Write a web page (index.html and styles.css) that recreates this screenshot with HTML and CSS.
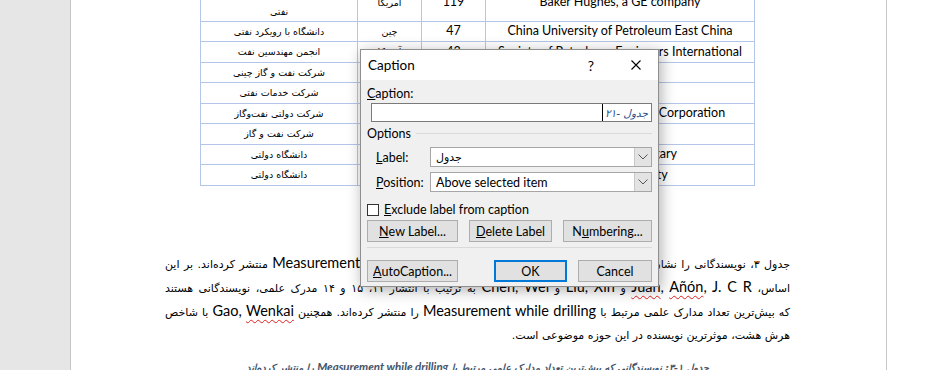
FILE: index.html
```html
<!DOCTYPE html>
<html lang="fa">
<head>
<meta charset="utf-8">
<link rel="stylesheet" href="styles.css">
</head>
<body>
<div class="app">
  <div class="gutter"></div>
  <div class="page">
    <table class="tbl">
      <colgroup><col class="c1"><col class="c2"><col class="c3"><col class="c4"></colgroup>
      <tr class="first"><td class="fa">شرکت خدمات مهندسی<br>نفتی</td><td class="fa">آمریکا</td><td>119</td><td>Baker Hughes, a GE company</td></tr>
      <tr><td class="fa">دانشگاه با رویکرد نفتی</td><td class="fa">چین</td><td>47</td><td>China University of Petroleum East China</td></tr>
      <tr><td class="fa">انجمن مهندسین نفت</td><td class="fa">آمریکا</td><td>43</td><td>Society of Petroleum Engineers International</td></tr>
      <tr><td class="fa">شرکت نفت و گاز چینی</td><td class="fa">چین</td><td>40</td><td>Sinopec</td></tr>
      <tr><td class="fa">شرکت خدمات نفتی</td><td class="fa">آمریکا</td><td>35</td><td>Schlumberger</td></tr>
      <tr><td class="fa">شرکت دولتی نفت‌وگاز</td><td class="fa">چین</td><td>30</td><td>China National Petroleum Corporation</td></tr>
      <tr><td class="fa">شرکت نفت و گاز</td><td class="fa">آمریکا</td><td>28</td><td>Halliburton</td></tr>
      <tr><td class="fa">دانشگاه دولتی</td><td class="fa">کانادا</td><td>25</td><td>University of Calgary</td></tr>
      <tr><td class="fa">دانشگاه دولتی</td><td class="fa">چین</td><td>22</td><td>Tianjin University</td></tr>
    </table>

    <div class="para" dir="rtl">
      <div class="ln j">جدول ۳، نویسندگانی را نشان می‌دهد که بیش‌ترین تعداد مدارک مرتبط با <span class="en">Measurement while drilling</span> منتشر کرده‌اند. بر این</div>
      <div class="ln j">اساس، <span class="en"><span class="sq">Juan</span>, <span class="sq">Añón</span>, J. C R</span> و <span class="en">Liu, Xin</span> و <span class="en">Chen, Wei</span> به ترتیب با انتشار ۱۱، ۱۵ و ۱۴ مدرک علمی، نویسندگانی هستند</div>
      <div class="ln j">که بیش‌ترین تعداد مدارک علمی مرتبط با <span class="en">Measurement while drilling</span> را منتشر کرده‌اند. همچنین <span class="en">Gao, <span class="sq">Wenkai</span></span> با شاخص</div>
      <div class="ln">هرش هشت، موثرترین نویسنده در این حوزه موضوعی است.</div>
    </div>

    <div class="cap" dir="rtl">جدول ۱-۳: نویسندگانی که بیش‌ترین تعداد مدارک علمی مرتبط با <span class="en">Measurement while drilling</span> را منتشر کرده‌اند</div>
  </div>
  <div class="side"></div>

  <div class="dlg">
    <div class="dlg-title">
      <span class="ttl">Caption</span>
      <span class="help">?</span>
      <svg class="close" width="10" height="10" viewBox="0 0 10 10"><path d="M0.5 0.5 L9.5 9.5 M9.5 0.5 L0.5 9.5" stroke="#000" stroke-width="1.1" fill="none"/></svg>
    </div>
    <div class="dlg-body">
      <div class="lbl"><u>C</u>aption:</div>
      <div class="field"><span class="caret"></span><span class="pre"><span>۲۱-</span> <span>جدول</span></span></div>
      <div class="group"><span>Options</span><span class="rule"></span></div>
      <div class="row">
        <span class="rl"><u>L</u>abel:</span>
        <div class="select"><span class="val fa2">جدول</span><span class="dd"><svg width="10" height="6" viewBox="0 0 10 6"><path d="M0.5 0.5 L5 5 L9.5 0.5" stroke="#555" stroke-width="1" fill="none"/></svg></span></div>
      </div>
      <div class="row row2">
        <span class="rl"><u>P</u>osition:</span>
        <div class="select"><span class="val">Above selected item</span><span class="dd"><svg width="10" height="6" viewBox="0 0 10 6"><path d="M0.5 0.5 L5 5 L9.5 0.5" stroke="#555" stroke-width="1" fill="none"/></svg></span></div>
      </div>
      <div class="chk"><span class="box"></span><span><u>E</u>xclude label from caption</span></div>
      <div class="btns">
        <span class="btn b-new"><u>N</u>ew Label...</span>
        <span class="btn b-del"><u>D</u>elete Label</span>
        <span class="btn b-num">N<u>u</u>mbering...</span>
      </div>
      <div class="sep"></div>
      <div class="btns bottom">
        <span class="btn b-auto"><u>A</u>utoCaption...</span>
        <span class="spacer"></span>
        <span class="btn b-ok">OK</span>
        <span class="btn b-cancel">Cancel</span>
      </div>
    </div>
  </div>
</div>
</body>
</html>
```

FILE: styles.css
```css
* { box-sizing: border-box; margin: 0; padding: 0; }
html, body { width: 929px; height: 370px; overflow: hidden; background: #fff; }
body { font-family: Lato, "DejaVu Sans", sans-serif; color: #000; }

.app { display: flex; height: 370px; position: relative; }
.gutter { width: 71px; flex: none; background: #e6e6e6; border-right: 1px solid #c6c6c6; }
.page { width: 816px; flex: none; background: #fff; border-right: 1px solid #c6c6c6; padding: 0 96px 0 94px; }
.side { flex: 1; background: #fff; }

/* table */
.tbl { border-collapse: collapse; table-layout: fixed; width: 554px; margin: -17px auto 0; }
.tbl .c1 { width: 157px; }
.tbl .c2 { width: 64px; }
.tbl .c3 { width: 64px; }
.tbl .c4 { width: 269px; }
.tbl td { border: 1px solid #b4c6e7; height: 20.5px; padding: 0; text-align: center; vertical-align: middle; font-size: 12.5px; line-height: 14px; white-space: nowrap; overflow: hidden; }
.tbl tr.first td { height: 37.5px; }
.tbl tr.first td.fa:first-child { padding-top: 2px; }
.tbl td.fa { font-family: "DejaVu Sans", sans-serif; font-size: 9.5px; line-height: 17px; }

/* paragraph */
.para { margin-top: 65px; font-family: "DejaVu Sans", sans-serif; font-size: 11px; }
.ln { line-height: 24.4px; height: 24.4px; text-align: right; }
.ln.j { text-align: justify; text-align-last: justify; }
.en { font-family: Lato, sans-serif; font-size: 14.5px; }
.sq { text-decoration: underline wavy #e02020; text-decoration-thickness: 1px; text-underline-offset: 3px; text-decoration-skip-ink: none; }

.cap { margin-top: 12px; text-align: center; font-family: "DejaVu Sans", sans-serif; font-size: 9.5px; font-weight: bold; font-style: italic; color: #44546a; line-height: 14px; }
.cap .en { font-size: 11.5px; font-style: italic; font-weight: bold; }

/* dialog */
.dlg { position: absolute; left: 360px; top: 49px; width: 299px; height: 238px; border: 1px solid #8e8e8e; background: #f0f0f0; box-shadow: 2px 3px 14px rgba(0,0,0,0.32); font-family: Lato, "DejaVu Sans", sans-serif; font-size: 12.5px; }
.dlg-title { height: 30px; background: #fff; display: flex; align-items: center; padding: 0 17px 0 7px; }
.ttl { font-size: 13.5px; flex: 1; }
.help { font-size: 14px; margin-right: 37px; }
.close { display: block; }

.dlg-body { padding: 6px 6px 0 6px; display: flex; flex-direction: column; }
.lbl { line-height: 15px; height: 15px; }
.field { margin: 2px 0 0 4px; height: 19px; background: #fff; border: 1px solid #7a7a7a; display: flex; justify-content: flex-end; align-items: center; }
.caret { width: 1px; height: 17px; background: #000; }
.pre { padding: 0 3px 0 2px; font-family: "DejaVu Sans", sans-serif; font-size: 10.5px; font-style: italic; color: #2d4f8c; white-space: nowrap; }

.group { margin-top: 4px; height: 14px; display: flex; align-items: center; gap: 5px; }
.rule { flex: 1; height: 1px; background: #dadada; }

.row { margin-top: 7px; height: 20px; display: flex; align-items: center; }
.row2 { margin-top: 5px; }
.rl { width: 63px; padding-left: 9px; }
.select { flex: 1; height: 20px; background: #fff; border: 1px solid #a6a6a6; display: flex; align-items: center; }
.val { flex: 1; padding-left: 5px; white-space: nowrap; }
.fa2 { font-family: "DejaVu Sans", sans-serif; font-size: 11px; }
.dd { width: 17px; height: 18px; background: #e3e3e3; border-left: 1px solid #c8c8c8; display: flex; align-items: center; justify-content: center; }
.dd svg { display: block; }

.chk { margin-top: 11px; height: 13px; display: flex; align-items: center; gap: 5px; }
.box { width: 12px; height: 12px; background: #fff; border: 1px solid #333; flex: none; }

.btns { margin-top: 4px; height: 22px; display: flex; gap: 11px; }
.btn { height: 22px; background: #e1e1e1; border: 1px solid #adadad; display: flex; align-items: center; justify-content: center; white-space: nowrap; }
.b-new { width: 91px; }
.b-del { width: 83px; }
.b-num { width: 89px; }
.sep { margin-top: 5px; height: 1px; background: #dadada; }
.bottom { margin-top: 12px; height: 22px; }
.bottom .btn { height: 22px; }
.b-auto { width: 91px; }
.spacer { flex: 1; }
.b-ok { width: 73px; border: 2px solid #0078d7; }
.b-cancel { width: 74px; }
```
